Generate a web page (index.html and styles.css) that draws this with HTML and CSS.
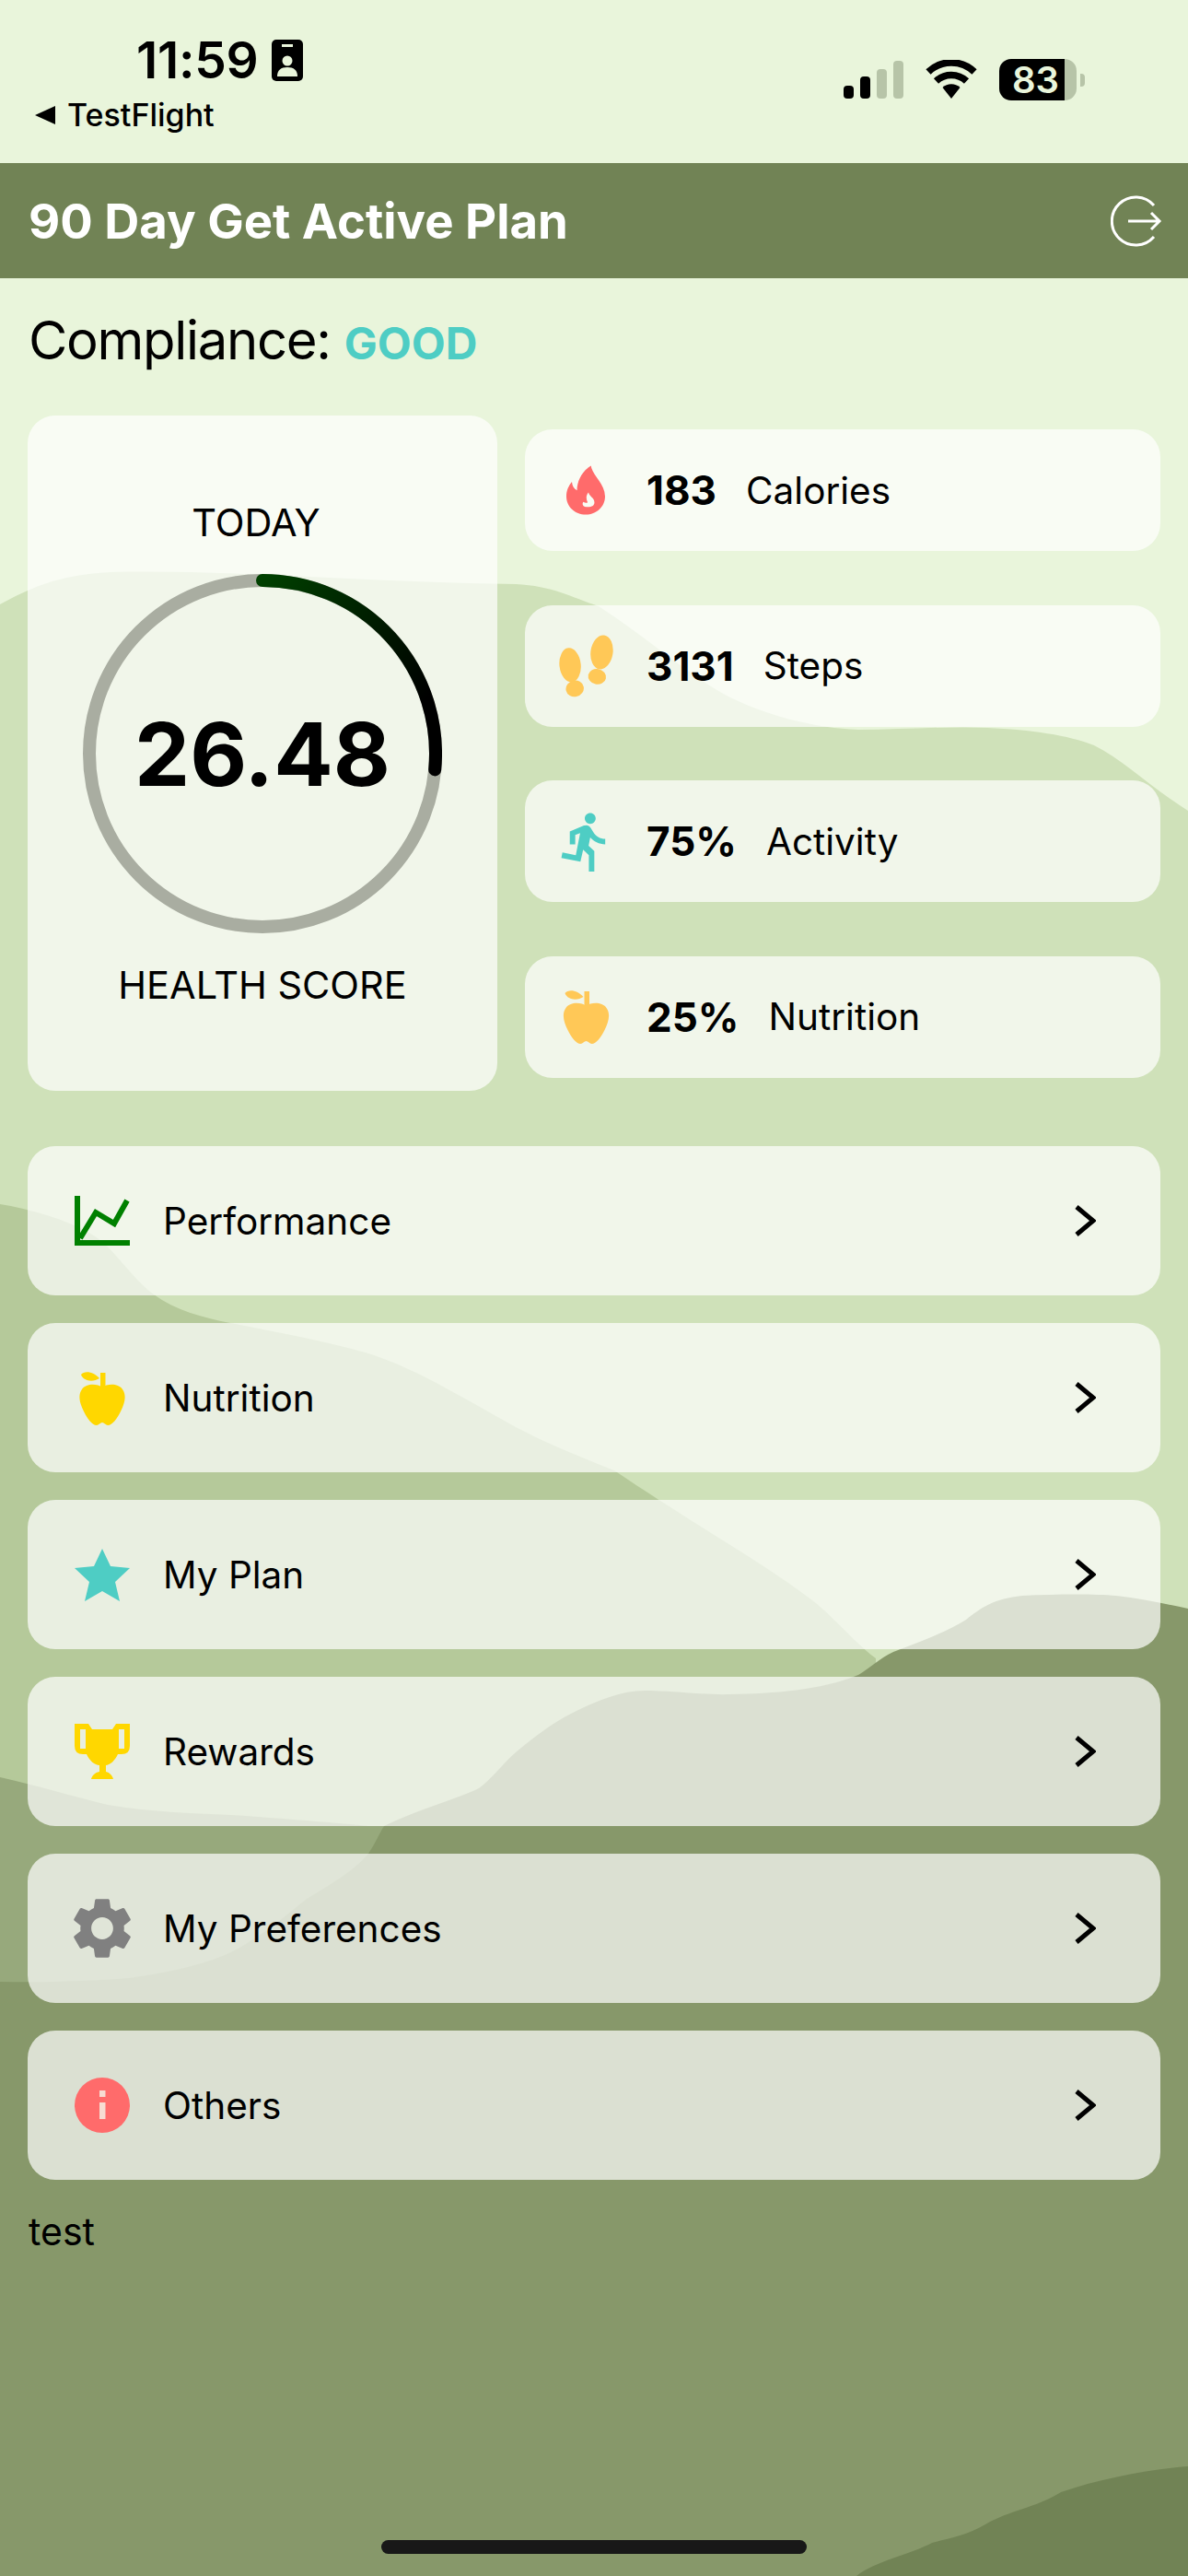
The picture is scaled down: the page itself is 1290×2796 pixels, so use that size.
FILE: index.html
```html
<!DOCTYPE html>
<html lang="en">
<head>
  <meta charset="UTF-8" />
  <meta name="viewport" content="width=device-width, initial-scale=1.0"/>
  <title>90 Day Get Active Plan</title>
  <link rel="stylesheet" href="styles.css">
</head>
<body>
  <svg class="hills" viewBox="0 0 1290 2796" aria-hidden="true">
    <path fill="#cfe1b9" d="M0 656 C30 640 60 624 120 621 C250 618 400 632 560 634 C600 636 620 648 650 658 C700 690 750 735 793 757 C830 775 880 790 932 792 C980 792 1030 788 1072 790 C1120 792 1160 798 1188 809 C1220 825 1250 855 1290 880 V2796 H0 Z"/>
    <path fill="#b5c99a" d="M0 1307 C30 1312 70 1322 100 1340 C125 1355 140 1385 167 1405 C190 1422 220 1430 250 1436 C300 1446 350 1455 400 1469 C450 1485 490 1510 560 1549 C600 1570 640 1585 667 1596 C710 1625 750 1650 793 1677 C830 1700 860 1720 886 1740 C910 1760 930 1785 951 1800 V2796 H0 Z"/>
    <path fill="#97a97c" d="M0 1929 C40 1938 80 1950 117 1959 C170 1968 220 1968 267 1971 C320 1975 360 1978 400 1982 L600 1982 V2796 H0 Z"/>
    <path fill="#87986a" d="M0 2151 C50 2152 100 2150 140 2147 C190 2140 235 2130 267 2110 C295 2093 315 2075 333 2061 C360 2045 385 2030 400 2012 C408 2000 412 1990 417 1982 C450 1965 490 1955 520 1941 C535 1930 545 1915 560 1902 C580 1885 600 1870 620 1860 C650 1845 675 1835 700 1835 C730 1835 765 1840 793 1839 C840 1838 890 1835 932 1818 C945 1810 955 1800 970 1793 C1000 1782 1030 1770 1049 1758 C1065 1745 1080 1735 1110 1732 C1150 1730 1190 1730 1212 1732 C1240 1735 1265 1741 1290 1746 V2796 H0 Z"/>
    <path fill="#718355" d="M930 2796 C950 2780 990 2772 1012 2760 C1030 2755 1050 2752 1070 2740 C1095 2725 1125 2722 1152 2705 C1195 2690 1250 2680 1290 2677 V2796 Z"/>
  </svg>

  <div class="app">
    <div class="status-bar">
      <div class="status-left">
        <div class="clock">
          <span class="time">11:59</span>
          <svg class="contact" viewBox="0 0 34 45">
            <rect width="34" height="45" rx="5" fill="#000"/>
            <rect x="11" y="5" width="12" height="3" fill="#e9f5db"/>
            <circle cx="17" cy="23" r="5.5" fill="#e9f5db"/>
            <path fill="#e9f5db" d="M6 40 C6 33 10 30 17 30 C24 30 28 33 28 40 Z"/>
          </svg>
        </div>
        <div class="back">
          <svg class="back-arrow" viewBox="0 0 22 20"><polygon points="0,10 22,0 22,20" fill="#000"/></svg>
          <span>TestFlight</span>
        </div>
      </div>
      <div class="status-right">
        <div class="signal">
          <i class="bar bar-1"></i>
          <i class="bar bar-2"></i>
          <i class="bar bar-3 off"></i>
          <i class="bar bar-4 off"></i>
        </div>
        <svg class="wifi" viewBox="0 0 58 42">
          <path d="M4 13 A36 36 0 0 1 54 13" fill="none" stroke="#000" stroke-width="7.5"/>
          <path d="M12.5 23 A24 24 0 0 1 45.5 23" fill="none" stroke="#000" stroke-width="7.5"/>
          <path d="M29 42 L19.5 30 A14 14 0 0 1 38.5 30 Z" fill="#000"/>
        </svg>
        <div class="battery">
          <div class="battery-body"><span>83</span></div>
          <i class="battery-tip"></i>
        </div>
      </div>
    </div>

    <header class="top-bar">
      <h1>90 Day Get Active Plan</h1>
      <svg class="logout" viewBox="0 0 56 56">
        <path d="M47 11 A26 26 0 1 0 47 45" fill="none" stroke="#fff" stroke-width="3"/>
        <path d="M19 28 H53 M44 19 L53 28 L44 37" fill="none" stroke="#fff" stroke-width="3"/>
      </svg>
    </header>

    <main class="content">
      <div class="compliance">Compliance: <strong>GOOD</strong></div>

      <section class="summary">
        <div class="score-card">
          <div class="score-label today">TODAY</div>
          <div class="ring">
            <svg viewBox="0 0 390 390">
              <defs>
                <linearGradient id="ringGrad" gradientUnits="userSpaceOnUse" x1="195" y1="7" x2="370" y2="140">
                  <stop offset="0" stop-color="#004000"/>
                  <stop offset="1" stop-color="#000"/>
                </linearGradient>
              </defs>
              <circle cx="195" cy="195" r="188" fill="none" stroke="#a9ada1" stroke-width="14"/>
              <path d="M195 7 A188 188 0 0 1 382.2 212.4" fill="none" stroke="url(#ringGrad)" stroke-width="14" stroke-linecap="round"/>
            </svg>
            <div class="score">26.48</div>
          </div>
          <div class="score-label">HEALTH SCORE</div>
        </div>

        <div class="stats">
          <div class="stat">
            <div class="stat-icon">
              <svg class="ic-fire" viewBox="0 0 91 115">
                <path fill="#ff6b6b" fill-rule="evenodd" d="M58 0 C60 22 90 40 91 72 C91 97 70 115 46 115 C20 115 0 96 0 72 C0 58 6 46 13 38 C14 48 18 54 25 58 C25 35 38 12 58 0 Z M52 63 C54 72 66 76 66 86 C66 96 56 97 47 97 C39 97 36 90 40 85 C44 88 48 88 50 86 C46 78 46 70 52 63 Z"/>
              </svg>
            </div>
            <b>183</b><span>Calories</span>
          </div>
          <div class="stat">
            <div class="stat-icon">
              <svg class="ic-steps" viewBox="0 0 127 145" fill="#ffc857">
                <ellipse cx="26" cy="70" rx="25" ry="40" transform="rotate(-6 26 70)"/>
                <ellipse cx="37" cy="125" rx="21" ry="19" transform="rotate(-12 37 125)"/>
                <ellipse cx="100" cy="40" rx="26" ry="40" transform="rotate(8 100 40)"/>
                <ellipse cx="89" cy="97" rx="21" ry="18" transform="rotate(12 89 97)"/>
              </svg>
            </div>
            <b>3131</b><span>Steps</span>
          </div>
          <div class="stat">
            <div class="stat-icon">
              <svg class="ic-run" viewBox="0 0 24 24">
                <path fill="#4ecdc4" d="M13.49 5.48c1.1 0 2-.9 2-2s-.9-2-2-2-2 .9-2 2 .9 2 2 2zm-3.6 13.9l1-4.4 2.1 2v6h2v-7.5l-2.1-2 .6-3c1.3 1.5 3.3 2.5 5.5 2.5v-2c-1.9 0-3.5-1-4.3-2.4l-1-1.6c-.4-.6-1-1-1.7-1-.3 0-.5.1-.8.1l-5.2 2.2v4.7h2v-3.4l1.8-.7-1.6 8.1-4.9-1-.4 2 7 1.4z"/>
              </svg>
            </div>
            <b>75%</b><span>Activity</span>
          </div>
          <div class="stat">
            <div class="stat-icon">
              <svg class="ic-apple" viewBox="0 0 50 59" fill="#ffc857">
                <path d="M25 18 C20 14 8 13 3 20 C-2 27 1 36 5 44 C9 52 14 59 19 59 C21 59 23 56 25 56 C27 56 29 59 31 59 C36 59 41 52 45 44 C49 36 52 27 47 20 C42 13 30 14 25 18 Z"/>
                <path d="M2 4 C6 -1 16 1 22 8 C16 12 5 12 2 4 Z"/>
                <rect x="23" y="2" width="5.5" height="16"/>
              </svg>
            </div>
            <b>25%</b><span>Nutrition</span>
          </div>
        </div>
      </section>

      <nav class="menu">
        <a class="menu-row">
          <svg class="menu-icon ic-chart" viewBox="0 0 60 54">
            <path d="M3 0 V51 H60" fill="none" stroke="#008000" stroke-width="6"/>
            <path d="M6 46 L23 18 L43 30 L57 5" fill="none" stroke="#008000" stroke-width="6"/>
          </svg>
          <span>Performance</span>
          <svg class="chevron" viewBox="0 0 23 36"><path d="M2 3 L20 18 L2 33" fill="none" stroke="#000" stroke-width="5"/></svg>
        </a>
        <a class="menu-row">
          <svg class="menu-icon ic-menu-apple" viewBox="0 0 50 59" fill="#ffd700">
            <path d="M25 18 C20 14 8 13 3 20 C-2 27 1 36 5 44 C9 52 14 59 19 59 C21 59 23 56 25 56 C27 56 29 59 31 59 C36 59 41 52 45 44 C49 36 52 27 47 20 C42 13 30 14 25 18 Z"/>
            <path d="M2 4 C6 -1 16 1 22 8 C16 12 5 12 2 4 Z"/>
            <rect x="23" y="2" width="5.5" height="16"/>
          </svg>
          <span>Nutrition</span>
          <svg class="chevron" viewBox="0 0 23 36"><path d="M2 3 L20 18 L2 33" fill="none" stroke="#000" stroke-width="5"/></svg>
        </a>
        <a class="menu-row">
          <svg class="menu-icon ic-star" viewBox="0 0 60 57">
            <polygon fill="#4ecdc4" points="30,0 39,19 60,21 44,36 49,57 30,46 11,57 16,36 0,21 21,19"/>
          </svg>
          <span>My Plan</span>
          <svg class="chevron" viewBox="0 0 23 36"><path d="M2 3 L20 18 L2 33" fill="none" stroke="#000" stroke-width="5"/></svg>
        </a>
        <a class="menu-row">
          <svg class="menu-icon ic-trophy" viewBox="0 0 60 60">
            <path fill="#ffd700" fill-rule="evenodd" d="M0 0 H15 L19 6 H41 L45 0 H60 V24 Q60 33 51 33 H47 C44 40 38 45 34 45 V52 C38 53 41 56 42 60 H18 C19 56 22 53 27 52 V45 C22 45 16 40 13 33 H9 Q0 33 0 24 Z M6 6 V27 H12 V6 Z M48 6 V27 H54 V6 Z"/>
          </svg>
          <span>Rewards</span>
          <svg class="chevron" viewBox="0 0 23 36"><path d="M2 3 L20 18 L2 33" fill="none" stroke="#000" stroke-width="5"/></svg>
        </a>
        <a class="menu-row">
          <svg class="menu-icon ic-gear" viewBox="2 2 20 20">
            <path fill="#808080" d="M19.14 12.94c.04-.3.06-.61.06-.94 0-.32-.02-.64-.07-.94l2.03-1.58c.18-.14.23-.41.12-.61l-1.92-3.32c-.12-.22-.37-.29-.59-.22l-2.39.96c-.5-.38-1.03-.7-1.62-.94l-.36-2.54c-.04-.24-.24-.41-.48-.41h-3.84c-.24 0-.43.17-.47.41l-.36 2.54c-.59.24-1.13.57-1.62.94l-2.39-.96c-.22-.08-.47 0-.59.22L2.74 8.87c-.12.21-.08.47.12.61l2.03 1.58c-.05.3-.09.63-.09.94s.02.64.07.94l-2.03 1.58c-.18.14-.23.41-.12.61l1.92 3.32c.12.22.37.29.59.22l2.39-.96c.5.38 1.03.7 1.62.94l.36 2.54c.05.24.24.41.48.41h3.84c.24 0 .44-.17.47-.41l.36-2.54c.59-.24 1.13-.56 1.62-.94l2.39.96c.22.08.47 0 .59-.22l1.92-3.32c.12-.22.07-.47-.12-.61l-2.01-1.58zM12 15.6c-1.98 0-3.6-1.62-3.6-3.6s1.62-3.6 3.6-3.6 3.6 1.62 3.6 3.6-1.62 3.6-3.6 3.6z"/>
          </svg>
          <span>My Preferences</span>
          <svg class="chevron" viewBox="0 0 23 36"><path d="M2 3 L20 18 L2 33" fill="none" stroke="#000" stroke-width="5"/></svg>
        </a>
        <a class="menu-row">
          <svg class="menu-icon ic-info" viewBox="0 0 60 60">
            <circle cx="30" cy="30" r="30" fill="#ff6b6b"/>
            <rect x="27" y="14" width="6.5" height="7" fill="#f7dcd2"/>
            <rect x="27" y="27" width="6.5" height="18" fill="#f7dcd2"/>
          </svg>
          <span>Others</span>
          <svg class="chevron" viewBox="0 0 23 36"><path d="M2 3 L20 18 L2 33" fill="none" stroke="#000" stroke-width="5"/></svg>
        </a>
      </nav>

      <p class="note">test</p>
    </main>
  </div>

  <div class="home-bar"></div>
</body>
</html>
```

FILE: styles.css
```css
* {
  box-sizing: border-box;
  margin: 0;
  padding: 0;
}

html, body {
  width: 1290px;
  height: 2796px;
  overflow: hidden;
}

body {
  position: relative;
  background: #e9f5db;
  color: #000;
  font-family: Inter, 'Noto Sans', sans-serif;
}

.hills {
  position: absolute;
  top: 0;
  left: 0;
  width: 1290px;
  height: 2796px;
}

.app {
  position: relative;
  display: flex;
  flex-direction: column;
}

/* status bar */
.status-bar {
  height: 177px;
  display: flex;
  justify-content: space-between;
}

.status-left {
  padding: 43px 0 0 38px;
}

.clock {
  display: flex;
  align-items: flex-start;
  gap: 15px;
  padding-left: 110px;
  height: 45px;
}

.time {
  font-size: 55px;
  line-height: 45px;
  font-weight: 600;
  letter-spacing: -0.3px;
}

.contact {
  width: 34px;
  height: 45px;
}

.back {
  display: flex;
  align-items: center;
  gap: 13px;
  margin-top: 17px;
  font-size: 34px;
  line-height: 40px;
  font-weight: 500;
}

.back-arrow {
  width: 22px;
  height: 20px;
}

.status-right {
  display: flex;
  align-items: flex-end;
  height: 109px;
  padding-right: 112px;
}

.signal {
  display: flex;
  align-items: flex-end;
  gap: 7px;
  height: 41px;
  margin-bottom: 2px;
}

.bar {
  display: block;
  width: 11px;
  border-radius: 4px;
  background: #000;
}

.bar.off {
  background: #b7c4a8;
}

.bar-1 { height: 14px; }
.bar-2 { height: 24px; }
.bar-3 { height: 32px; }
.bar-4 { height: 41px; }

.wifi {
  width: 58px;
  height: 42px;
  margin: 0 23px 2px 23px;
}

.battery {
  display: flex;
  align-items: center;
  gap: 4px;
}

.battery-body {
  width: 84px;
  height: 45px;
  border-radius: 13px;
  background: linear-gradient(90deg, #000 71px, #b7c4a8 71px);
  color: #e9f5db;
  font-size: 40px;
  line-height: 45px;
  font-weight: 600;
  padding-left: 14px;
}

.battery-tip {
  display: block;
  width: 5px;
  height: 14px;
  border-radius: 0 4px 4px 0;
  background: #b7c4a8;
}

/* header */
.top-bar {
  height: 125px;
  background: #718355;
  display: flex;
  align-items: center;
  justify-content: space-between;
  padding: 0 28px 0 31px;
  color: #fff;
}

.top-bar h1 {
  font-size: 52.7px;
  font-weight: 700;
}

.logout {
  width: 56px;
  height: 56px;
}

.content {
  padding: 0 30px;
}

.compliance {
  height: 149px;
  padding: 32px 0 0 1px;
  font-size: 58px;
  line-height: 70px;
  letter-spacing: -1.3px;
}

.compliance strong {
  font-size: 48px;
  letter-spacing: 0;
  color: #4ecdc4;
  font-weight: 700;
}

/* score + stats */
.summary {
  display: grid;
  grid-template-columns: 510px 690px;
  column-gap: 30px;
  height: 733px;
}

.score-card {
  display: flex;
  flex-direction: column;
  align-items: center;
  justify-content: center;
  gap: 32px;
  background: rgba(255, 255, 255, 0.7);
  border-radius: 30px;
}

.score-label {
  font-size: 41.5px;
  line-height: 48px;
}

.today {
  margin-right: 14px;
}

.ring {
  display: grid;
  width: 390px;
  height: 390px;
}

.ring svg,
.score {
  grid-area: 1 / 1;
}

.ring svg {
  width: 390px;
  height: 390px;
}

.score {
  align-self: center;
  justify-self: center;
  font-size: 95.5px;
  font-weight: 700;
}

.stats {
  display: flex;
  flex-direction: column;
  justify-content: space-between;
  padding: 15px 0 14px;
}

.stat {
  height: 132px;
  display: flex;
  align-items: center;
  background: rgba(255, 255, 255, 0.7);
  border-radius: 30px;
  font-size: 40.5px;
}

.stat-icon {
  width: 132px;
  display: flex;
  justify-content: center;
}

.stat b {
  font-size: 44px;
  font-weight: 700;
  margin-right: 32px;
}

.ic-fire { width: 42px; height: 54px; }
.ic-steps { width: 59px; height: 68px; }
.ic-run { width: 71px; height: 71px; }
.ic-apple { width: 51px; height: 59px; }

/* menu */
.menu {
  display: flex;
  flex-direction: column;
  gap: 30px;
  margin-top: 60px;
}

.menu-row {
  height: 162px;
  display: flex;
  align-items: center;
  background: rgba(255, 255, 255, 0.7);
  border-radius: 30px;
  padding: 0 70px 0 51px;
  font-size: 40.5px;
}

.menu-row span {
  flex: 1;
}

.menu-icon {
  width: 60px;
  margin-right: 36px;
}

.ic-chart { height: 54px; }
.ic-menu-apple { height: 59px; }
.ic-star { height: 57px; }
.ic-trophy { height: 60px; }
.ic-gear {
  width: 66px;
  height: 66px;
  margin: 0 33px 0 -3px;
}
.ic-info { height: 60px; }

.chevron {
  width: 23px;
  height: 36px;
}

.note {
  margin: 31px 0 0 1px;
  font-size: 41px;
  line-height: 50px;
}

.home-bar {
  position: absolute;
  left: 414px;
  top: 2757px;
  width: 462px;
  height: 15px;
  border-radius: 8px;
  background: #181818;
}
```
